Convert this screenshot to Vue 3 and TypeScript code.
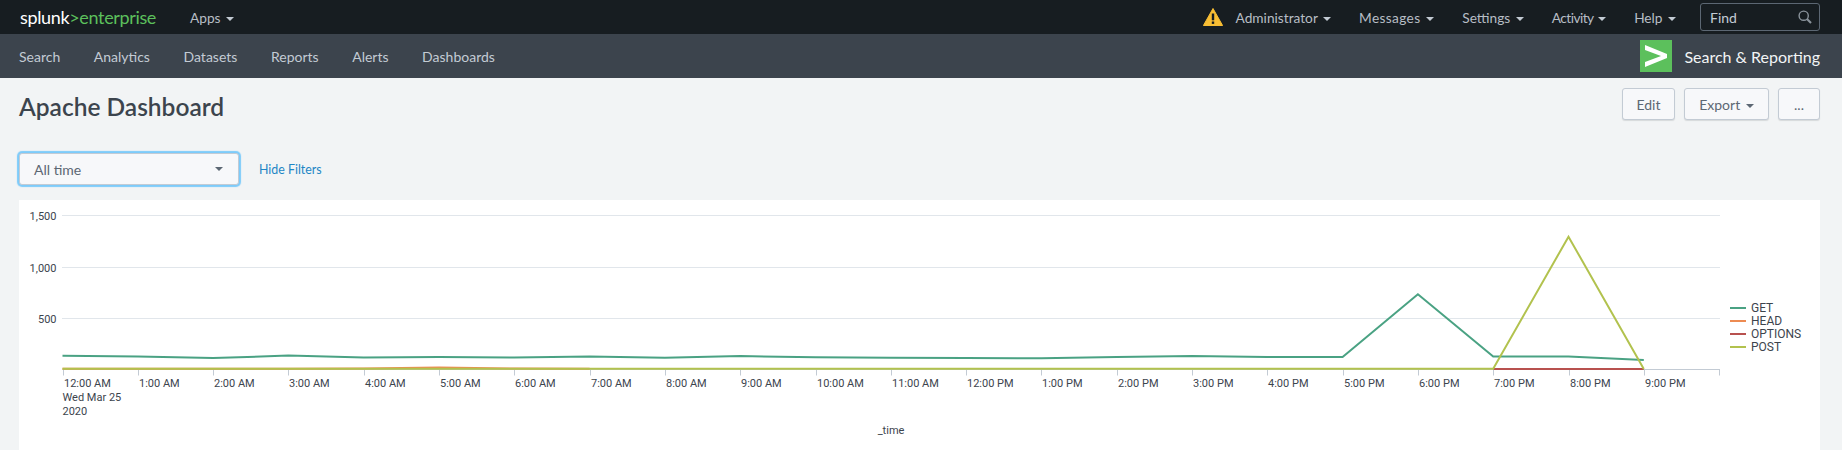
<template>
  <div class="page">
    <header class="topbar">
      <div class="brand"><span class="brand-white">splunk</span><span class="brand-green">&gt;enterprise</span></div>
      <a class="top-item apps">Apps <i class="caret"></i></a>
      <div class="top-right">
        <svg class="warn" width="20" height="18" viewBox="0 0 20 18">
          <path d="M10 0.5 L19.6 17.5 H0.4 Z" fill="#f8be34" stroke="#f8be34" stroke-linejoin="round" />
          <rect x="8.8" y="5.5" width="2.4" height="6.8" fill="#171d21" />
          <rect x="8.8" y="13.5" width="2.4" height="2.4" fill="#171d21" />
        </svg>
        <a v-for="item in topItems" :key="item.label" class="top-item" :class="item.cls">{{ item.label }} <i class="caret"></i></a>
        <div class="find">
          <span>Find</span>
          <svg width="14" height="14" viewBox="0 0 14 14" fill="none" stroke="#8a939b">
            <circle cx="5.7" cy="5.7" r="4.6" stroke-width="1.4" />
            <path d="M9 9 L13 13" stroke-width="2.2" />
          </svg>
        </div>
      </div>
    </header>

    <nav class="appbar">
      <a v-for="item in navItems" :key="item" class="nav-item">{{ item }}</a>
      <div class="app-title">
        <svg class="app-logo" width="32" height="32" viewBox="0 0 32 32">
          <rect width="32" height="32" fill="#5cc05c" />
          <path d="M5 5 L27 14 V18 L5 27 V22 L21 16 L5 10 Z" fill="#fff" />
        </svg>
        <span>Search &amp; Reporting</span>
      </div>
    </nav>

    <main class="content">
      <div class="title-row">
        <h1>Apache Dashboard</h1>
        <div class="actions">
          <button class="btn edit">Edit</button>
          <button class="btn export">Export <i class="caret dark"></i></button>
          <button class="btn more">...</button>
        </div>
      </div>

      <div class="filters">
        <div class="time-select">
          <span>All time</span>
          <i class="caret dark"></i>
        </div>
        <a class="hide-filters">Hide Filters</a>
      </div>

      <section class="panel">
        <svg class="chart" width="1801" height="250" viewBox="0 0 1801 250">
          <g v-for="g in gridLines" :key="g.label">
            <line :x1="43" :x2="1701" :y1="g.y" :y2="g.y" class="grid" />
            <text x="37.5" :y="g.y + 4" text-anchor="end" class="axis-label">{{ g.label }}</text>
          </g>

          <line x1="43.5" x2="1701" y1="169.5" y2="169.5" class="axis" />
          <g v-for="t in ticks" :key="t.label">
            <line :x1="t.x" :x2="t.x" y1="169.5" y2="175.5" class="axis" />
            <text :x="t.x + 0.5" y="187" class="axis-label">{{ t.label }}</text>
          </g>
          <line x1="1700.5" x2="1700.5" y1="169.5" y2="175.5" class="axis" />
          <text x="43.5" y="201" class="axis-label">Wed Mar 25</text>
          <text x="43.5" y="215" class="axis-label">2020</text>
          <text x="872" y="234" text-anchor="middle" class="axis-label">_time</text>

          <polyline :points="headPoints" class="series" stroke="#ed8b52" />
          <polyline :points="optionsPoints" class="series" stroke="#b8514f" />
          <polyline :points="getPoints" class="series" stroke="#4aa283" />
          <polyline :points="postPoints" class="series" stroke="#b2c24e" />

          <g v-for="(l, i) in legend" :key="l.name">
            <line x1="1711" x2="1727" :y1="108 + i * 13" :y2="108 + i * 13" :stroke="l.color" stroke-width="2" />
            <text x="1732" :y="112 + i * 13" class="legend-label">{{ l.name }}</text>
          </g>
        </svg>
      </section>
    </main>
  </div>
</template>

<script setup lang="ts">
const topItems = [
  { label: 'Administrator', cls: '' },
  { label: 'Messages', cls: 'wide' },
  { label: 'Settings', cls: '' },
  { label: 'Activity', cls: 'narrow' },
  { label: 'Help', cls: '' },
]
const navItems = ['Search', 'Analytics', 'Datasets', 'Reports', 'Alerts', 'Dashboards']

const gridLines = [
  { label: '1,500', y: 15.5 },
  { label: '1,000', y: 67.5 },
  { label: '500', y: 118.5 },
]

const tickLabels = [
  '12:00 AM', '1:00 AM', '2:00 AM', '3:00 AM', '4:00 AM', '5:00 AM', '6:00 AM', '7:00 AM',
  '8:00 AM', '9:00 AM', '10:00 AM', '11:00 AM', '12:00 PM', '1:00 PM', '2:00 PM', '3:00 PM',
  '4:00 PM', '5:00 PM', '6:00 PM', '7:00 PM', '8:00 PM', '9:00 PM',
]

const tickX = (i: number) => 43.5 + i * 75.3
const ticks = tickLabels.map((label, i) => ({ label, x: Math.round(tickX(i)) + 0.5 }))

const toPoints = (values: number[], start = 0) =>
  values.map((y, i) => `${tickX(i + start).toFixed(1)},${y}`).join(' ')

// y values in panel coordinates, read off the chart
const getPoints = toPoints([
  155.8, 156.6, 158, 155.6, 157.5, 157, 157.5, 156.6, 157.7, 156, 157.3, 157.7, 158, 158.3, 157,
  156, 157, 157, 94.3, 156.6, 156.6, 160,
])
const postPoints = toPoints([...new Array(20).fill(168.8), 36.7, 169])
const headPoints = toPoints([168.8, 168.8, 168.8, 168.8, 168.6, 167.6, 168.6, 168.8])
const optionsPoints = toPoints([169, 169, 169], 19)

const legend = [
  { name: 'GET', color: '#4aa283' },
  { name: 'HEAD', color: '#ed8b52' },
  { name: 'OPTIONS', color: '#b8514f' },
  { name: 'POST', color: '#b2c24e' },
]
</script>

<style>
html,
body {
  margin: 0;
  height: 100%;
  overflow: hidden;
  background: #f2f4f5;
}
</style>

<style scoped>
.page {
  height: 450px;
  font-family: Lato, "Liberation Sans", sans-serif;
  font-size: 14px;
  color: #3c444d;
  background: #f2f4f5;
  overflow: hidden;
}

.topbar {
  display: flex;
  align-items: center;
  height: 34px;
  padding: 0 22px 0 20px;
  background: #171d21;
}

.brand {
  font-size: 18px;
  letter-spacing: -0.35px;
  line-height: 34px;
}
.brand-white {
  color: #fff;
}
.brand-green {
  color: #5cc05c;
}

.top-item {
  color: #b7bec5;
  font-size: 13.7px;
  white-space: nowrap;
}
.top-item.wide {
  letter-spacing: 0.35px;
}
.top-item.narrow {
  letter-spacing: -0.55px;
}
.apps {
  margin-left: 34px;
}

.caret {
  display: inline-block;
  width: 0;
  height: 0;
  margin-left: 2px;
  vertical-align: 2px;
  border-left: 4px solid transparent;
  border-right: 4px solid transparent;
  border-top: 4px solid #c3cbd4;
}
.caret.dark {
  border-top-color: #5c6773;
}

.top-right {
  display: flex;
  align-items: center;
  gap: 28px;
  margin-left: auto;
}
.warn {
  margin-right: -15px;
}

.find {
  display: flex;
  align-items: center;
  justify-content: space-between;
  box-sizing: border-box;
  width: 120px;
  height: 28px;
  margin-left: -4px;
  padding: 0 7px 0 9px;
  border: 1px solid #5c6773;
  border-radius: 3px;
  color: #c3cbd4;
}

.appbar {
  display: flex;
  align-items: center;
  gap: 33.6px;
  height: 44px;
  padding: 0 22px 0 19px;
  background: #3c444d;
}
.nav-item {
  color: #c3cbd4;
  font-size: 14px;
}
.app-title {
  display: flex;
  align-items: center;
  gap: 12px;
  margin-left: auto;
  color: #f2f4f5;
  font-size: 16px;
}

.content {
  padding: 10px 22px 0 19px;
}

.title-row {
  display: flex;
  justify-content: space-between;
  align-items: flex-start;
  height: 65px;
}
h1 {
  margin: 0;
  padding-top: 4px;
  font-size: 24.5px;
  font-weight: 600;
  line-height: 30px;
  color: #3c444d;
}

.actions {
  display: flex;
  gap: 9px;
}
.btn {
  box-sizing: border-box;
  height: 32px;
  padding: 0;
  font-family: inherit;
  font-size: 14px;
  color: #5c6773;
  background: #f7f8fa;
  border: 1px solid #c3cbd4;
  border-radius: 3px;
  box-shadow: 0 1px 1px rgba(60, 68, 77, 0.15);
}
.edit {
  width: 53px;
}
.export {
  width: 85px;
}
.more {
  width: 42px;
}

.filters {
  display: flex;
  align-items: center;
  gap: 20px;
  height: 32px;
}
.time-select {
  display: flex;
  align-items: center;
  justify-content: space-between;
  box-sizing: border-box;
  width: 220px;
  height: 32px;
  padding: 0 15px 0 14px;
  color: #5c6773;
  background: #f7f8fa;
  border: 1px solid #c3cbd4;
  border-radius: 3px;
  box-shadow: 0 0 1px 2px #7dcbfa;
}
.hide-filters {
  color: #1d86c5;
  font-size: 12.4px;
}

.panel {
  margin: 15px 0 0;
  height: 250px;
  background: #fff;
}
.chart {
  display: block;
  width: 1801px;
}

.grid {
  stroke: #e1e6eb;
  stroke-width: 1;
}
.axis {
  stroke: #c3cbd4;
  stroke-width: 1;
}
.axis-label {
  font-family: Roboto, "Liberation Sans", sans-serif;
  font-size: 11px;
  fill: #3c444d;
}
.legend-label {
  font-family: Roboto, "Liberation Sans", sans-serif;
  font-size: 12px;
  fill: #3c444d;
}
.series {
  fill: none;
  stroke-width: 2;
}
</style>
